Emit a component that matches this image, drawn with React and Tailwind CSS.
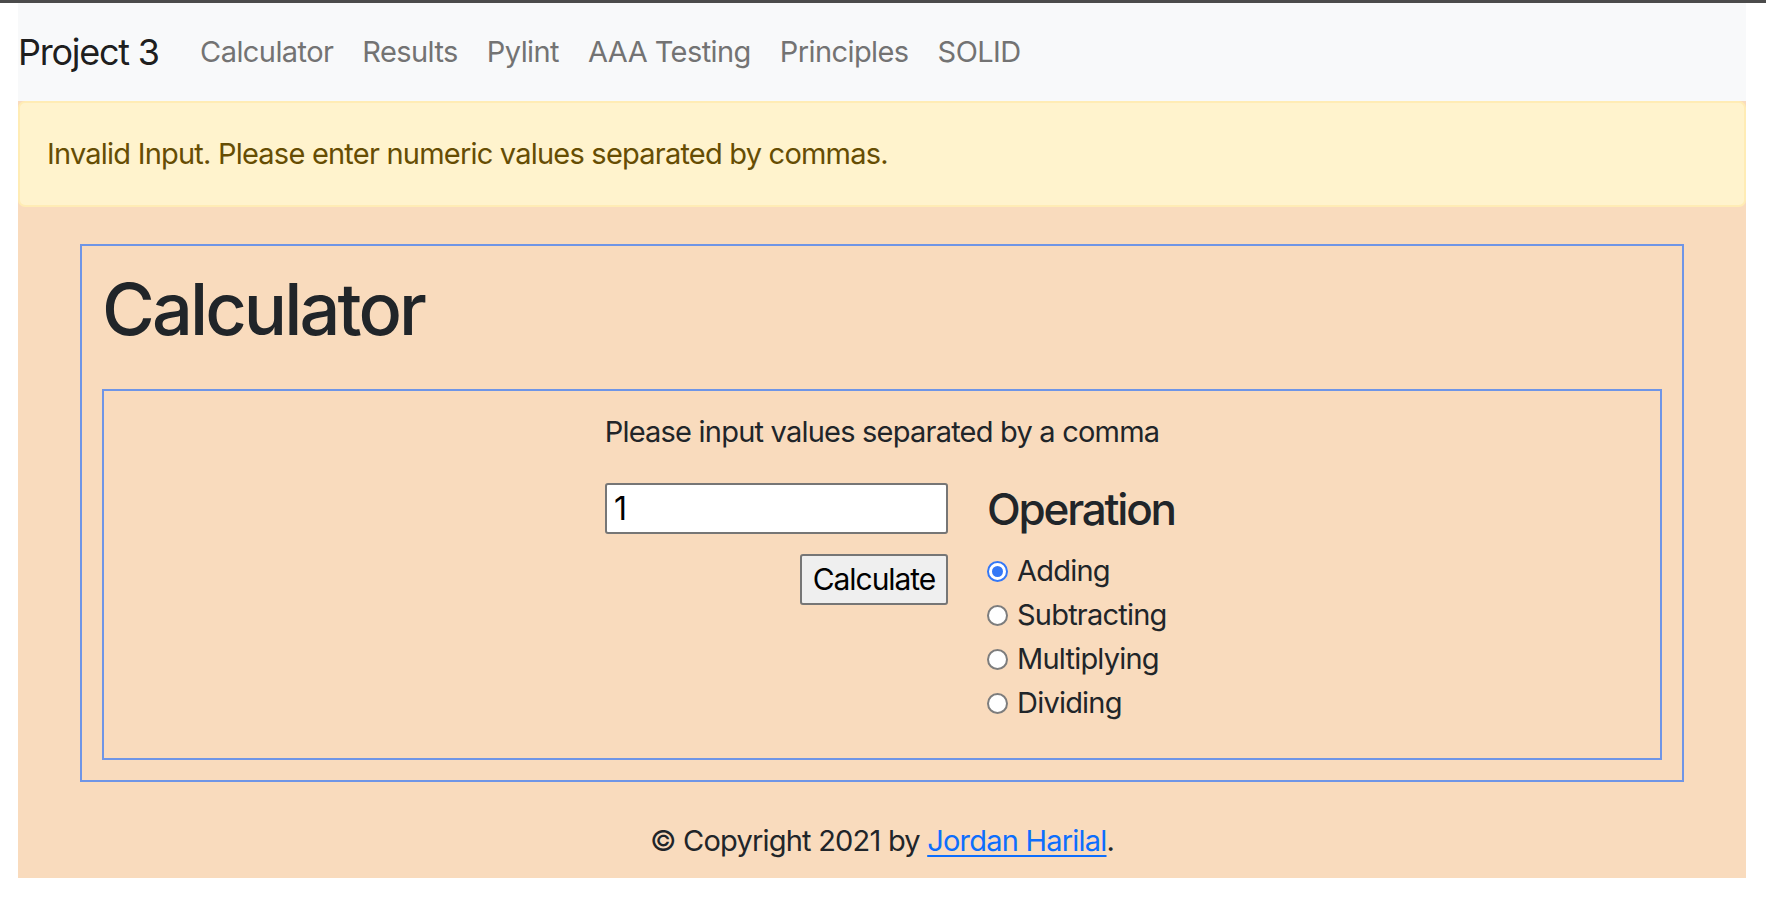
const links = ["Calculator", "Results", "Pylint", "AAA Testing", "Principles", "SOLID"];
const ops = [
  { label: "Adding", checked: true },
  { label: "Subtracting" },
  { label: "Multiplying" },
  { label: "Dividing" },
];

const Radio = ({ checked }) =>
  checked ? (
    <span className="w-[21px] h-[21px] rounded-full border-[2px] border-[#3478f6] bg-white flex items-center justify-center shrink-0">
      <span className="w-[11px] h-[11px] rounded-full bg-[#3478f6]" />
    </span>
  ) : (
    <span className="w-[21px] h-[21px] rounded-full border-[2px] border-[#7d7d7d] bg-white shrink-0" />
  );

export default function App() {
  return (
    <div className="min-h-[898px] bg-white border-t-[3px] border-[#4b4b4b] font-['Inter','Noto_Sans',sans-serif] text-[#212529]">
      <div className="ml-[18px] mr-[20px]">
        {/* Navbar */}
        <nav className="h-[98px] bg-[#f8f9fa] flex items-center">
          <span className="text-[36px] text-black/90 mr-[27px] tracking-[-0.035em]">Project 3</span>
          {links.map((l) => (
            <a key={l} className="px-[14.5px] text-[29px] text-[#737373] tracking-[-0.02em]">
              {l}
            </a>
          ))}
        </nav>

        <div className="bg-[#f9dbbd]">
          {/* Alert */}
          <div className="bg-[#fff3cd] border-[2px] border-[#ffecb5] rounded-[7px] px-[27px] py-[29px] text-[29px] leading-[44px] text-[#664d03] tracking-[-0.027em]">
            Invalid Input. Please enter numeric values separated by commas.
          </div>

          <main className="pt-[37px] pb-[16px]">
            <div className="mx-[62px] border-[2px] border-[#6f95e6] p-[20px]">
              <h1 className="text-[72px] leading-[86px] font-medium tracking-[-0.04em] mb-[37px]">Calculator</h1>

              <div className="border-[2px] border-[#6f95e6] pt-[19px] pb-[33px] flex flex-col items-center">
                <p className="text-[29px] leading-[43px] mb-[26px] tracking-[-0.027em]">
                  Please input values separated by a comma
                </p>
                <div className="flex items-start gap-[39px] ml-[10px]">
                  <div className="flex flex-col items-end pt-[4px]">
                    <div className="w-[343px] h-[51px] bg-white border-[2px] border-[#767676] rounded-[3px] px-[7px] flex items-center text-[32px] text-black">
                      1
                    </div>
                    <button className="mt-[20px] w-[148px] h-[51px] bg-[#efefef] border-[2px] border-[#767676] rounded-[3px] text-[30px] text-black tracking-[-0.035em]">
                      Calculate
                    </button>
                  </div>
                  <div className="w-[182px]">
                    <h4 className="text-[44px] leading-[60px] font-medium tracking-[-0.05em] mb-[10px] whitespace-nowrap">Operation</h4>
                    {ops.map((o) => (
                      <label key={o.label} className="flex items-center gap-[9px] h-[44px] text-[29px] tracking-[-0.027em] whitespace-nowrap">
                        <Radio checked={o.checked} />
                        {o.label}
                      </label>
                    ))}
                  </div>
                </div>
              </div>
            </div>

            <p className="mt-[37px] text-center text-[29px] leading-[43px] tracking-[-0.027em]">
              © Copyright 2021 by{" "}
              <a className="text-[#0d6efd] underline underline-offset-[4px]">Jordan Harilal</a>.
            </p>
          </main>
        </div>
      </div>
    </div>
  );
}
